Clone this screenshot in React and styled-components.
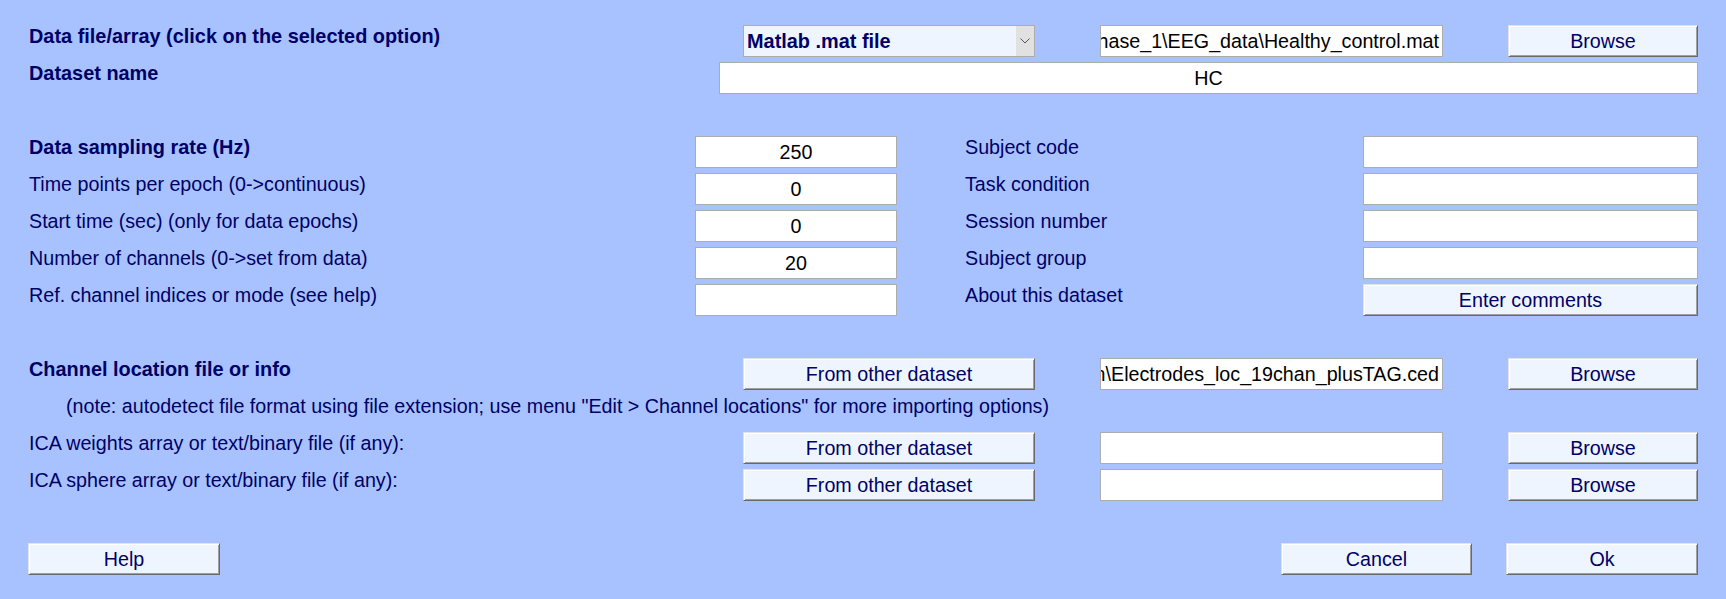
import React from "react";
import styled, { createGlobalStyle } from "styled-components";

const Global = createGlobalStyle`
  html, body { margin: 0; padding: 0; background: #A8C2FF; }
`;

const Page = styled.div`
  box-sizing: border-box;
  width: 1726px;
  height: 599px;
  padding: 25px 28px 0;
  display: flex;
  flex-direction: column;
  gap: 5px;
  background: #A8C2FF;
  font-family: "Liberation Sans", Arial, sans-serif;
  font-size: 19.7px;
  color: #000066;
`;

const Row = styled.div`
  display: grid;
  grid-template-columns: ${(p) => p.$cols};
  column-gap: ${(p) => p.$gap || 0}px;
  height: 32px;
`;

const Spacer = styled.div`
  height: 32px;
`;

const Label = styled.div`
  padding-left: ${(p) => p.$indent || 1}px;
  font-weight: ${(p) => (p.$bold ? 700 : 400)};
  font-size: ${(p) => (p.$bold ? "19.9px" : "inherit")};
  line-height: normal;
  white-space: nowrap;
  align-self: start;
`;

const Field = styled.div`
  box-sizing: border-box;
  height: 32px;
  background: #ffffff;
  border: 1px solid #adadad;
  display: flex;
  align-items: center;
  justify-content: ${(p) => p.$align || "center"};
  padding: 0 3px;
  color: #000000;
  overflow: hidden;
  white-space: nowrap;
`;

const Button = styled.button`
  box-sizing: border-box;
  height: 32px;
  width: ${(p) => (p.$w ? `${p.$w}px` : "100%")};
  margin: 0;
  padding: 0;
  font: inherit;
  color: #000066;
  background: #eef5ff;
  border: 1px solid;
  border-color: #e3e3e3 #696969 #696969 #e3e3e3;
  box-shadow: inset 1px 1px 0 #ffffff, inset -1px -1px 0 #a0a0a0;
`;

const Select = styled.div`
  box-sizing: border-box;
  height: 32px;
  display: flex;
  background: #eef5ff;
  border: 1px solid #adadad;
`;

const SelectText = styled.div`
  flex: 1;
  display: flex;
  align-items: center;
  padding-left: 3px;
  font-weight: 700;
  font-size: 19.9px;
  color: #000066;
  white-space: nowrap;
`;

const SelectArrow = styled.div`
  width: 18px;
  background: #e1e1e1;
  display: flex;
  align-items: center;
  justify-content: center;
`;

const BottomBar = styled.div`
  display: flex;
  gap: 34px;
  height: 32px;
`;

const Push = styled.div`
  flex: 1;
`;

const FILE_COLS = "650px 292px 343px 190px";
const NAME_COLS = "691px 979px";
const PARAM_COLS = "667px 202px 67px 399px 335px";

function ParamRow({ label, bold, value, right, rightControl }) {
  return (
    <Row $cols={PARAM_COLS}>
      <Label $bold={bold}>{label}</Label>
      <Field>{value}</Field>
      <div />
      <Label>{right}</Label>
      {rightControl || <Field />}
    </Row>
  );
}

function FileRow({ label, bold, control, path }) {
  return (
    <Row $cols={FILE_COLS} $gap={65}>
      <Label $bold={bold}>{label}</Label>
      {control}
      <Field $align="flex-end">{path}</Field>
      <Button>Browse</Button>
    </Row>
  );
}

export default function App() {
  return (
    <>
      <Global />
      <Page>
        <FileRow
          label="Data file/array (click on the selected option)"
          bold
          control={
            <Select>
              <SelectText>Matlab .mat file</SelectText>
              <SelectArrow>
                <svg width="10" height="6" viewBox="0 0 10 6">
                  <polyline
                    points="0.5,0.5 5,5 9.5,0.5"
                    fill="none"
                    stroke="#555"
                    strokeWidth="1"
                  />
                </svg>
              </SelectArrow>
            </Select>
          }
          path="hase_1\EEG_data\Healthy_control.mat"
        />
        <Row $cols={NAME_COLS}>
          <Label $bold>Dataset name</Label>
          <Field>HC</Field>
        </Row>
        <Spacer />
        <ParamRow label="Data sampling rate (Hz)" bold value="250" right="Subject code" />
        <ParamRow label="Time points per epoch (0->continuous)" value="0" right="Task condition" />
        <ParamRow label="Start time (sec) (only for data epochs)" value="0" right="Session number" />
        <ParamRow label="Number of channels (0->set from data)" value="20" right="Subject group" />
        <ParamRow
          label="Ref. channel indices or mode (see help)"
          value=""
          right="About this dataset"
          rightControl={<Button>Enter comments</Button>}
        />
        <Spacer />
        <FileRow
          label="Channel location file or info"
          bold
          control={<Button>From other dataset</Button>}
          path="n\Electrodes_loc_19chan_plusTAG.ced"
        />
        <Row $cols="1fr">
          <Label $indent={38}>
            (note: autodetect file format using file extension; use menu "Edit &gt; Channel locations" for more importing options)
          </Label>
        </Row>
        <FileRow
          label="ICA weights array or text/binary file (if any):"
          control={<Button>From other dataset</Button>}
          path=""
        />
        <FileRow
          label="ICA sphere array or text/binary file (if any):"
          control={<Button>From other dataset</Button>}
          path=""
        />
        <Spacer />
        <BottomBar>
          <Button $w={192}>Help</Button>
          <Push />
          <Button $w={191}>Cancel</Button>
          <Button $w={192}>Ok</Button>
        </BottomBar>
      </Page>
    </>
  );
}
